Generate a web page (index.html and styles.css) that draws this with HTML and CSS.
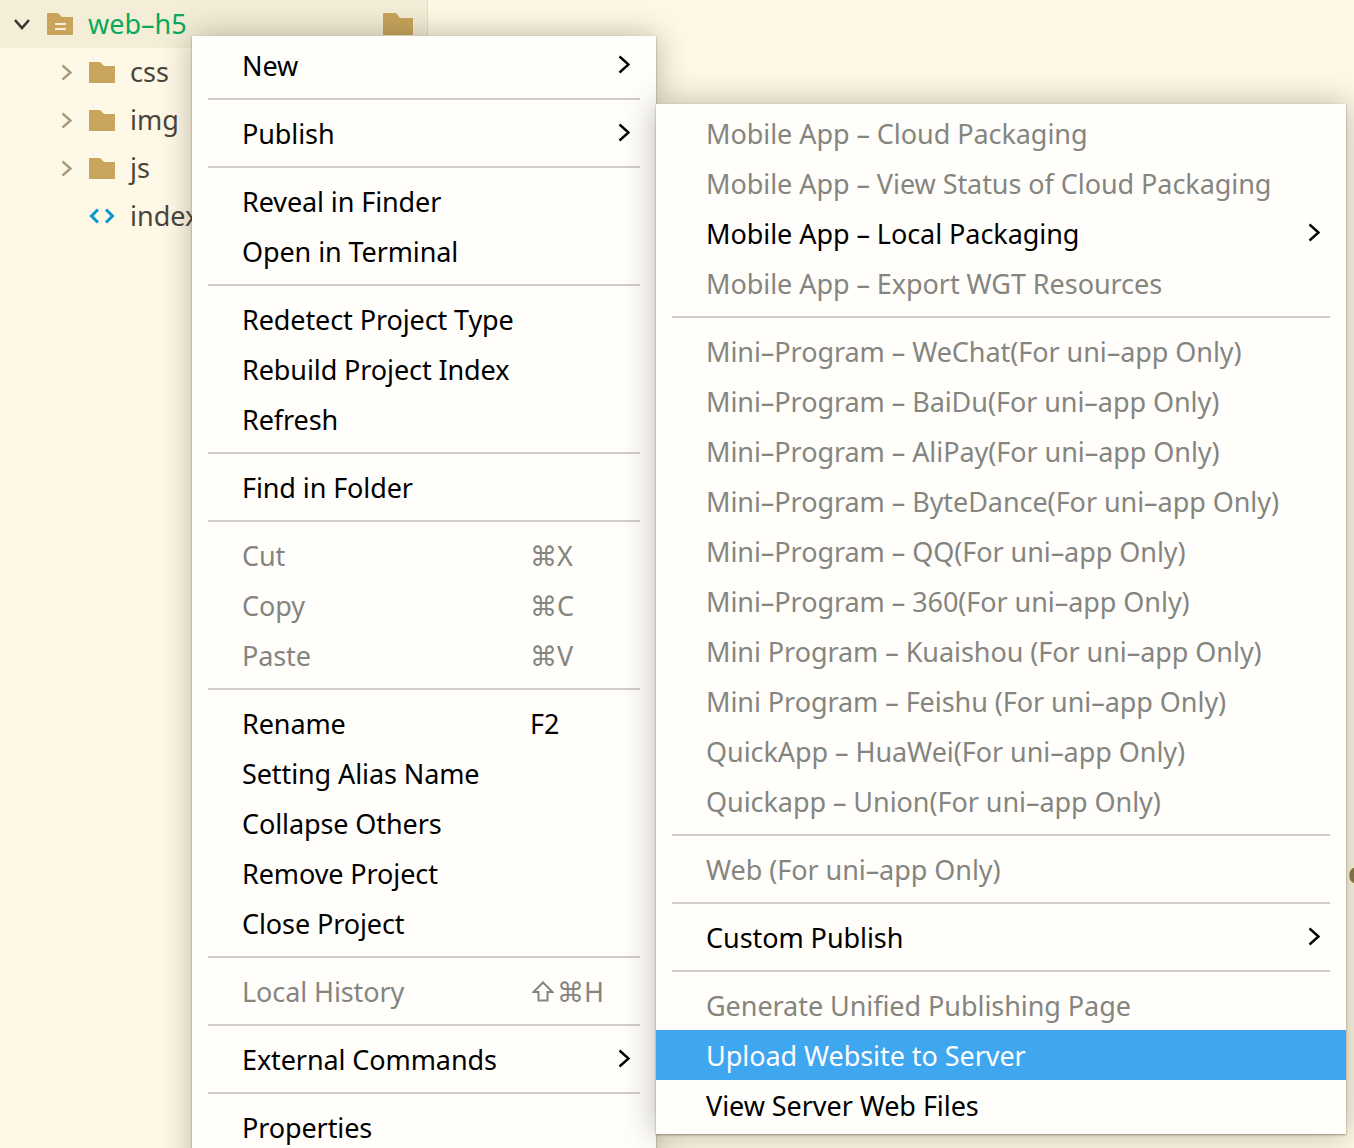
FILE: index.html
```html
<!DOCTYPE html>
<html lang="en">
<head>
<meta charset="utf-8">
<title>Publish menu</title>
<link rel="stylesheet" href="styles.css">
</head>
<body>
<aside class="sidebar">
  <div class="row root">
    <svg class="twist-down" width="18" height="12" viewBox="0 0 18 12"><path d="M2 2l7 8 7-8" fill="none" stroke="#38362f" stroke-width="2.6"/></svg>
    <svg class="project" width="26" height="22" viewBox="0 0 26 22"><path d="M0 0h11l4 4h11v18H0z" fill="#c8a45c"/><path d="M8 11h11M8 16h11" stroke="#f5eed8" stroke-width="2"/></svg>
    <span class="root-name">web–h5</span>
    <svg class="root-folder" width="30" height="22" viewBox="0 0 30 22"><path d="M0 0h13l4 5h13v17H0z" fill="#c8a45c"/></svg>
  </div>
  <div class="row child">
    <svg class="twist" width="11" height="17" viewBox="0 0 11 17"><path d="M1.5 1.5l8 7-8 7" fill="none" stroke="#a99a7b" stroke-width="2.4"/></svg>
    <svg class="folder" width="26" height="21" viewBox="0 0 26 21"><path d="M0 0h11l4 4h11v17H0z" fill="#c8a45c"/></svg>
    <span>css</span>
  </div>
  <div class="row child">
    <svg class="twist" width="11" height="17" viewBox="0 0 11 17"><path d="M1.5 1.5l8 7-8 7" fill="none" stroke="#a99a7b" stroke-width="2.4"/></svg>
    <svg class="folder" width="26" height="21" viewBox="0 0 26 21"><path d="M0 0h11l4 4h11v17H0z" fill="#c8a45c"/></svg>
    <span>img</span>
  </div>
  <div class="row child">
    <svg class="twist" width="11" height="17" viewBox="0 0 11 17"><path d="M1.5 1.5l8 7-8 7" fill="none" stroke="#a99a7b" stroke-width="2.4"/></svg>
    <svg class="folder" width="26" height="21" viewBox="0 0 26 21"><path d="M0 0h11l4 4h11v17H0z" fill="#c8a45c"/></svg>
    <span>js</span>
  </div>
  <div class="row child file">
    <svg class="folder" width="26" height="16" viewBox="0 0 26 16"><path d="M9 1.5L2.5 8 9 14.5M17 1.5L23.5 8 17 14.5" fill="none" stroke="#0a94d8" stroke-width="3"/></svg>
    <span>index.html</span>
  </div>
</aside>
<span class="stray">e</span>

<nav class="menu menu-main">
  <div class="item"><span class="label">New</span><svg class="chev" width="12" height="19" viewBox="0 0 12 19"><path d="M1.5 1.5l9 8-9 8" fill="none" stroke="#000" stroke-width="2.4"/></svg></div>
  <div class="sep"></div>
  <div class="item"><span class="label">Publish</span><svg class="chev" width="12" height="19" viewBox="0 0 12 19"><path d="M1.5 1.5l9 8-9 8" fill="none" stroke="#000" stroke-width="2.4"/></svg></div>
  <div class="sep"></div>
  <div class="item"><span class="label">Reveal in Finder</span></div>
  <div class="item"><span class="label">Open in Terminal</span></div>
  <div class="sep"></div>
  <div class="item"><span class="label">Redetect Project Type</span></div>
  <div class="item"><span class="label">Rebuild Project Index</span></div>
  <div class="item"><span class="label">Refresh</span></div>
  <div class="sep"></div>
  <div class="item"><span class="label">Find in Folder</span></div>
  <div class="sep"></div>
  <div class="item off"><span class="label">Cut</span><span class="key">⌘X</span></div>
  <div class="item off"><span class="label">Copy</span><span class="key">⌘C</span></div>
  <div class="item off"><span class="label">Paste</span><span class="key">⌘V</span></div>
  <div class="sep"></div>
  <div class="item"><span class="label">Rename</span><span class="key">F2</span></div>
  <div class="item"><span class="label">Setting Alias Name</span></div>
  <div class="item"><span class="label">Collapse Others</span></div>
  <div class="item"><span class="label">Remove Project</span></div>
  <div class="item"><span class="label">Close Project</span></div>
  <div class="sep"></div>
  <div class="item off"><span class="label">Local History</span><span class="key key-shift"><svg class="shift" width="22" height="21" viewBox="0 0 22 21"><path d="M11 1.5L20.5 11H15.5V19.5H6.5V11H1.5z" fill="none" stroke="#85857f" stroke-width="2"/></svg>⌘H</span></div>
  <div class="sep"></div>
  <div class="item"><span class="label">External Commands</span><svg class="chev" width="12" height="19" viewBox="0 0 12 19"><path d="M1.5 1.5l9 8-9 8" fill="none" stroke="#000" stroke-width="2.4"/></svg></div>
  <div class="sep"></div>
  <div class="item"><span class="label">Properties</span></div>
</nav>

<nav class="menu menu-sub">
  <div class="item off"><span>Mobile App – Cloud Packaging</span></div>
  <div class="item off"><span>Mobile App – View Status of Cloud Packaging</span></div>
  <div class="item"><span>Mobile App – Local Packaging</span><svg class="chev" width="12" height="19" viewBox="0 0 12 19"><path d="M1.5 1.5l9 8-9 8" fill="none" stroke="#000" stroke-width="2.4"/></svg></div>
  <div class="item off"><span>Mobile App – Export WGT Resources</span></div>
  <div class="sep"></div>
  <div class="item off"><span>Mini–Program – WeChat(For uni–app Only)</span></div>
  <div class="item off"><span>Mini–Program – BaiDu(For uni–app Only)</span></div>
  <div class="item off"><span>Mini–Program – AliPay(For uni–app Only)</span></div>
  <div class="item off"><span>Mini–Program – ByteDance(For uni–app Only)</span></div>
  <div class="item off"><span>Mini–Program – QQ(For uni–app Only)</span></div>
  <div class="item off"><span>Mini–Program – 360(For uni–app Only)</span></div>
  <div class="item off"><span>Mini Program – Kuaishou (For uni–app Only)</span></div>
  <div class="item off"><span>Mini Program – Feishu (For uni–app Only)</span></div>
  <div class="item off"><span>QuickApp – HuaWei(For uni–app Only)</span></div>
  <div class="item off"><span>Quickapp – Union(For uni–app Only)</span></div>
  <div class="sep"></div>
  <div class="item off"><span>Web (For uni–app Only)</span></div>
  <div class="sep"></div>
  <div class="item"><span>Custom Publish</span><svg class="chev" width="12" height="19" viewBox="0 0 12 19"><path d="M1.5 1.5l9 8-9 8" fill="none" stroke="#000" stroke-width="2.4"/></svg></div>
  <div class="sep"></div>
  <div class="item off short"><span>Generate Unified Publishing Page</span></div>
  <div class="item active low"><span>Upload Website to Server</span></div>
  <div class="item low"><span>View Server Web Files</span></div>
</nav>
</body>
</html>
```

FILE: styles.css
```css
html, body {
  margin: 0;
  height: 1148px;
  overflow: hidden;
}
body {
  position: relative;
  background: #fef8e6;
  font-family: "Noto Sans", "DejaVu Sans", sans-serif;
  font-size: 27px;
  color: #000;
}
.sidebar {
  width: 427px;
  height: 1148px;
  border-right: 1px solid #e8dfc6;
  color: #4a453c;
  overflow: hidden;
}
.row {
  height: 48px;
  display: flex;
  align-items: center;
  white-space: nowrap;
}
.row span { padding-bottom: 2px; }
.root {
  background: #f4eed8;
  position: relative;
}
.twist-down { margin-left: 13px; }
.project { margin-left: 16px; }
.root-name {
  margin-left: 15px;
  color: #0aa95a;
}
.root-folder {
  position: absolute;
  left: 383px;
  top: 13px;
}
.twist { margin-left: 61px; }
.folder { margin-left: 17px; }
.child span { margin-left: 15px; }
.file .folder { margin-left: 89px; }
.stray {
  position: absolute;
  left: 1348px;
  top: 852px;
  font-size: 30px;
  font-weight: 700;
  color: #857a4c;
}
.menu {
  position: absolute;
  background: #fffefb;
  padding: 5px 0;
  box-shadow: 0 0 30px rgba(60, 50, 30, 0.34), 0 1px 2px rgba(60, 50, 30, 0.45);
}
.menu-main {
  left: 192px;
  top: 36px;
  width: 464px;
  height: 1200px;
  letter-spacing: -0.1px;
}
.menu-sub {
  left: 656px;
  top: 104px;
  width: 690px;
  padding-bottom: 4px;
  letter-spacing: -0.06px;
}
.item {
  height: 50px;
  display: flex;
  align-items: center;
  padding-bottom: 2px;
  padding-left: 50px;
  box-sizing: border-box;
  white-space: nowrap;
}
.short {
  height: 49px;
  padding-bottom: 0;
}
.low { padding-bottom: 0; }
.label { width: 288px; }
.key { letter-spacing: 0; }
.key-shift {
  display: inline-flex;
  align-items: center;
  gap: 3px;
  margin-left: 2px;
}
.off { color: #85857f; }
.active {
  background: #3fa6f0;
  color: #fff;
}
.chev {
  margin-left: auto;
  margin-right: 26px;
  margin-bottom: 2px;
}
.sep {
  height: 2px;
  margin: 7px 16px 9px;
  background: #cfccca;
}
```
